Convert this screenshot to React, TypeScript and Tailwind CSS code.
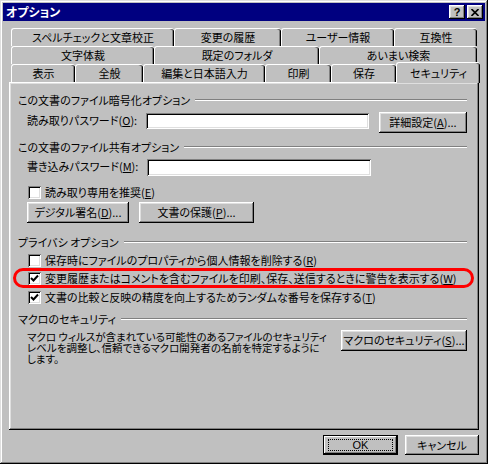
const raised =
  "shadow-[inset_-1px_-1px_0_#000,inset_1px_1px_0_#fff,inset_-2px_-2px_0_#808080,inset_2px_2px_0_#dfdfdf]";
const sunken =
  "shadow-[inset_1px_1px_0_#808080,inset_-1px_-1px_0_#fff,inset_2px_2px_0_#000,inset_-2px_-2px_0_#dfdfdf]";
const tabEdge =
  "border-l border-t border-white rounded-tl-[3px] rounded-tr-[3px] shadow-[inset_-1px_0_0_#000,inset_-2px_0_0_#808080]";

const row1 = [
  { w: "w-[163px]", label: "スペルチェックと文章校正" },
  { w: "w-[107px]", label: "変更の履歴" },
  { w: "w-[113px]", label: "ユーザー情報" },
  { w: "w-[83px]", label: "互換性" },
];
const row2 = [
  { w: "w-[143px]", label: "文字体裁" },
  { w: "w-[165px]", label: "既定のフォルダ" },
  { w: "w-[158px]", label: "あいまい検索" },
];
const row3 = [
  { w: "w-[64px]", label: "表示" },
  { w: "w-[68px]", label: "全般" },
  { w: "w-[122px]", label: "編集と日本語入力" },
  { w: "w-[66px]", label: "印刷" },
  { w: "w-[65px]", label: "保存" },
];

function Tab({ w, label }: { w: string; label: string }) {
  return (
    <div className={`${w} ${tabEdge} flex h-[18px] shrink-0 items-center justify-center bg-[#c0c0c0]`}>
      {label}
    </div>
  );
}

function Group({ title }: { title: string }) {
  return (
    <div className="flex h-[16px] items-center">
      <span className="whitespace-nowrap">{title}</span>
      <div className="ml-[5px] h-[2px] flex-1 border-t border-[#808080] border-b border-b-white" />
    </div>
  );
}

function Button({ w, children }: { w: string; children: React.ReactNode }) {
  return (
    <div className={`${w} ${raised} flex h-[21px] shrink-0 items-center justify-center whitespace-nowrap bg-[#c0c0c0]`}>
      {children}
    </div>
  );
}

function Check({ on, children }: { on?: boolean; children: React.ReactNode }) {
  return (
    <div className="ml-[10px] flex h-[18px] items-center">
      <div className={`${sunken} flex h-[13px] w-[13px] shrink-0 items-center justify-center bg-white`}>
        {on && (
          <svg width="9" height="9" viewBox="0 0 9 9">
            <path d="M1 4 L3.5 6.5 L8 1.5" fill="none" stroke="#000" strokeWidth="2" />
          </svg>
        )}
      </div>
      <span className="ml-[4px] whitespace-nowrap">{children}</span>
    </div>
  );
}

export default function App() {
  return (
    <div className="h-[464px] w-[488px] overflow-hidden bg-[#c0c0c0] p-[3px] font-['Noto_Sans_CJK_JP','Noto_Sans_CJK_SC',sans-serif] text-[11px] leading-none text-black [font-feature-settings:'palt'] shadow-[inset_-1px_-1px_0_#000,inset_1px_1px_0_#dfdfdf,inset_-2px_-2px_0_#808080,inset_2px_2px_0_#fff]">
      {/* title bar */}
      <div className="flex h-[18px] items-center bg-[#000080] pl-[3px] pr-[2px]">
        <span className="flex-1 text-[12px] font-bold text-white">オプション</span>
        <div className={`${raised} flex h-[14px] w-[16px] items-center justify-center bg-[#c0c0c0] font-['Liberation_Sans',sans-serif] text-[11px] font-bold`}>
          ?
        </div>
        <div className={`${raised} ml-[2px] flex h-[14px] w-[16px] items-center justify-center bg-[#c0c0c0]`}>
          <svg width="8" height="7" viewBox="0 0 8 7">
            <path d="M0.5 0 L7.5 7 M7.5 0 L0.5 7" stroke="#000" strokeWidth="1.6" />
          </svg>
        </div>
      </div>

      {/* tabs */}
      <div className="ml-[8px] mt-[7px] flex flex-col">
        <div className="flex">
          {row1.map((t) => (
            <Tab key={t.label} {...t} />
          ))}
        </div>
        <div className="flex">
          {row2.map((t) => (
            <Tab key={t.label} {...t} />
          ))}
        </div>
        <div className="flex h-[18px]">
          {row3.map((t) => (
            <Tab key={t.label} {...t} />
          ))}
          <div className={`${tabEdge} relative z-10 -mt-[2px] flex h-[21px] w-[84px] shrink-0 items-start justify-center bg-[#c0c0c0] pt-[5px]`}>
            セキュリティ
          </div>
        </div>
      </div>

      {/* panel */}
      <div className={`${raised} relative ml-[6px] flex h-[348px] w-[470px] flex-col bg-[#c0c0c0] pl-[9px] pr-[12px] pt-[10px]`}>
        <Group title="この文書のファイル暗号化オプション" />
        <div className="mt-[4px] flex h-[21px] items-start">
          <span className="ml-[9px] mt-[3px] w-[120px] whitespace-nowrap">
            読み取りパスワード(<u>O</u>):
          </span>
          <div className={`${sunken} mt-[1px] h-[16px] w-[224px] bg-white`} />
          <div className="ml-[10px]">
            <Button w="w-[88px]">
              詳細設定(<u>A</u>)...
            </Button>
          </div>
        </div>

        <div className="mt-[6px]">
          <Group title="この文書のファイル共有オプション" />
        </div>
        <div className="mt-[4px] flex h-[17px] items-start">
          <span className="ml-[9px] mt-[2px] w-[120px] whitespace-nowrap">
            書き込みパスワード(<u>M</u>):
          </span>
          <div className={`${sunken} h-[17px] w-[224px] bg-white`} />
        </div>
        <div className="mt-[7px]">
          <Check>
            読み取り専用を推奨(<u>E</u>)
          </Check>
        </div>
        <div className="ml-[9px] mt-[1px] flex gap-[10px]">
          <Button w="w-[102px]">
            デジタル署名(<u>D</u>)...
          </Button>
          <Button w="w-[115px]">
            文書の保護(<u>P</u>)...
          </Button>
        </div>

        <div className="mt-[11px]">
          <Group title="プライバシ オプション" />
        </div>
        <div className="mt-[1px]">
          <Check>
            保存時にファイルのプロパティから個人情報を削除する(<u>R</u>)
          </Check>
        </div>
        <Check on>
          変更履歴またはコメントを含むファイルを印刷、保存、送信するときに警告を表示する(<u>W</u>)
        </Check>
        <div className="mt-[1px]">
          <Check on>
            文書の比較と反映の精度を向上するためランダムな番号を保存する(<u>T</u>)
          </Check>
        </div>

        <div className="mt-[5px]">
          <Group title="マクロのセキュリティ" />
        </div>
        <div className="mt-[3px] flex items-start justify-between">
          <p className="ml-[9px] mt-[1px] whitespace-nowrap text-[10.5px] leading-[11px]">
            マクロ ウィルスが含まれている可能性のあるファイルのセキュリティ
            <br />
            レベルを調整し、信頼できるマクロ開発者の名前を特定するように
            <br />
            します。
          </p>
          <Button w="w-[126px]">
            マクロのセキュリティ(<u>S</u>)...
          </Button>
        </div>

        {/* red highlight drawn over the dialog */}
        <div className="pointer-events-none absolute left-[4px] top-[186px] h-[20px] w-[461px] rounded-full border-[3px] border-[#ff0000]" />
      </div>

      {/* dialog buttons */}
      <div className="mr-[6px] mt-[5px] flex justify-end gap-[7px]">
        <div className="flex h-[20px] w-[75px] items-center justify-center border border-black bg-[#c0c0c0] shadow-[inset_-1px_-1px_0_#000,inset_1px_1px_0_#fff,inset_-2px_-2px_0_#808080]">
          <div className="flex h-[12px] w-[65px] items-center justify-center border border-dotted border-black font-['Liberation_Sans',sans-serif]">
            OK
          </div>
        </div>
        <div className={`${raised} flex h-[20px] w-[74px] items-center justify-center bg-[#c0c0c0]`}>
          キャンセル
        </div>
      </div>
    </div>
  );
}
